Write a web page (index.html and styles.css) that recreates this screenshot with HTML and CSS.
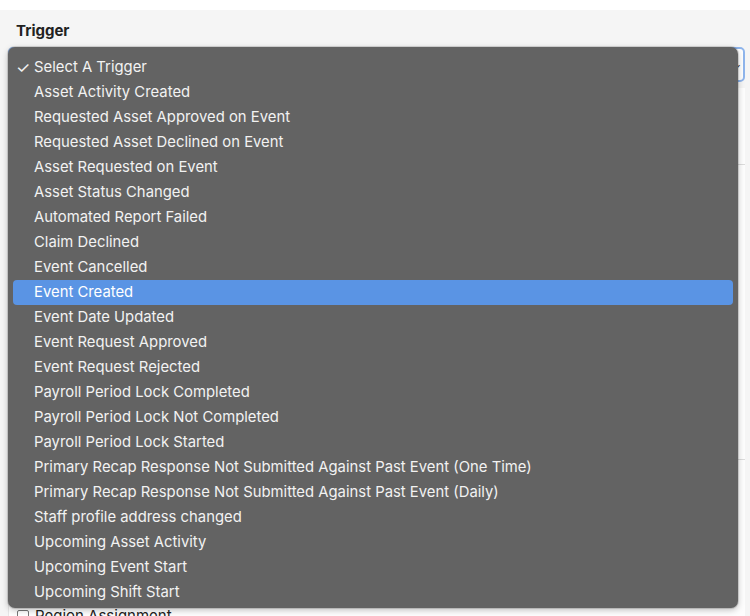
FILE: index.html
```html
<!DOCTYPE html>
<html>
<head>
<meta charset="utf-8">
<link rel="stylesheet" href="styles.css">
</head>
<body>
<div class="page">
  <div class="panel">
    <div class="label">Trigger</div>
    <div class="field">
      <div class="select">
        <span class="arrow">&#8964;</span>
      </div>
      <ul class="menu">
        <li class="checked"><span class="check">✓</span>Select A Trigger</li>
        <li>Asset Activity Created</li>
        <li>Requested Asset Approved on Event</li>
        <li>Requested Asset Declined on Event</li>
        <li>Asset Requested on Event</li>
        <li>Asset Status Changed</li>
        <li>Automated Report Failed</li>
        <li>Claim Declined</li>
        <li>Event Cancelled</li>
        <li class="active">Event Created</li>
        <li>Event Date Updated</li>
        <li>Event Request Approved</li>
        <li>Event Request Rejected</li>
        <li>Payroll Period Lock Completed</li>
        <li>Payroll Period Lock Not Completed</li>
        <li>Payroll Period Lock Started</li>
        <li>Primary Recap Response Not Submitted Against Past Event (One Time)</li>
        <li>Primary Recap Response Not Submitted Against Past Event (Daily)</li>
        <li>Staff profile address changed</li>
        <li>Upcoming Asset Activity</li>
        <li>Upcoming Event Start</li>
        <li>Upcoming Shift Start</li>
      </ul>
    </div>
    <div class="card">
      <div class="row r1"></div>
      <div class="row r2"></div>
      <div class="row r3">
        <span class="box"></span><span class="rtext">Region Assignment</span>
      </div>
    </div>
  </div>
</div>
</body>
</html>
```

FILE: styles.css
```css
html, body {
  margin: 0;
  padding: 0;
  background: #ffffff;
}
body {
  font-family: Inter, "Liberation Sans", Arial, sans-serif;
  width: 750px;
  height: 616px;
  overflow: hidden;
}
.page {
  padding-top: 10px;
}
.panel {
  background: #f5f5f5;
  height: 606px;
  padding: 0 5px 0 8px;
}
.label {
  font-size: 15px;
  font-weight: 700;
  color: #222;
  padding: 11px 0 0 8px;
  height: 26px;
}
.field {
  position: relative;
}
.select {
  height: 31px;
  background: #fff;
  border: 2px solid #8fb5ec;
  border-radius: 5px;
  display: flex;
  justify-content: flex-end;
  align-items: center;
  padding-right: 2px;
}
.arrow {
  font-size: 12px;
  color: #444;
  line-height: 1;
}
.menu {
  position: absolute;
  left: 0;
  top: 0;
  width: 720px;
  margin: 0;
  padding: 8px 5px 3px 5px;
  list-style: none;
  background: #636363;
  border-radius: 7px;
  box-shadow: 0 2px 6px rgba(0,0,0,0.25), 0 0 0 1px rgba(0,0,0,0.12);
  z-index: 5;
}
.menu li {
  height: 25px;
  line-height: 25px;
  font-size: 14.85px;
  color: #f2f2f2;
  padding-left: 21px;
  border-radius: 4px;
  position: relative;
  white-space: nowrap;
}
.menu li.active {
  background: #5a94e4;
  color: #fff;
}
.check {
  position: absolute;
  left: 3px;
  top: 0;
  font-size: 16px;
}
.card {
  margin-top: 6px;
  background: #fdfdfd;
  border-left: 1px solid #e6e6e6;
  height: 540px;
}
.row {
  border-bottom: 1px solid #dcdcdc;
}
.r1 { height: 76px; }
.r2 { height: 294px; }
.r3 {
  border-bottom: none;
  padding-top: 146px;
  display: flex;
  align-items: center;
  gap: 6px;
  padding-left: 8px;
}
.box {
  width: 10px;
  height: 10px;
  border: 1px solid #777;
  border-radius: 2px;
  background: #fff;
}
.rtext {
  font-size: 15px;
  color: #222;
}
```
